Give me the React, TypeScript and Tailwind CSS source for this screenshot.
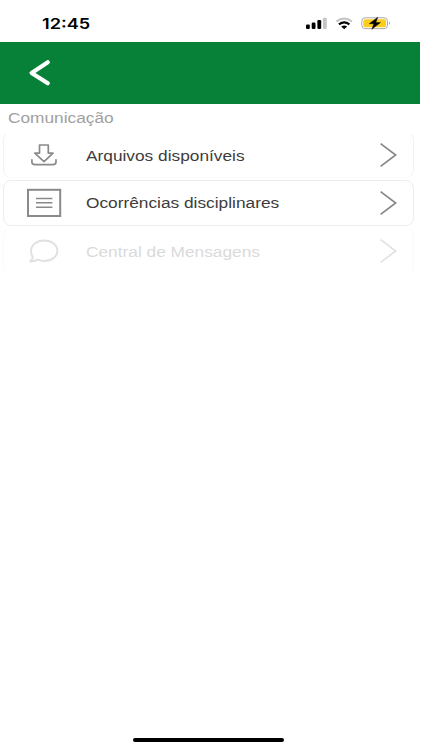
import React from "react";

type MenuItem = { label: string; icon: React.ReactNode; className: string; textClass: string };

function DownloadIcon() {
  return (
    <svg width="36" height="30" viewBox="0 0 36 30" fill="none" stroke="#8a8a8a" strokeWidth="1.7" strokeLinejoin="round" strokeLinecap="round">
      <path d="M13.500 5h8.800v8.100h4.700L18 21.600 8.800 13.100h4.700z" />
      <path d="M5.900 19.800v2.300q0 2.600 3 2.600h18.100q3 0 3-2.600v-2.300" />
    </svg>
  );
}

function ListIcon() {
  return (
    <svg width="36" height="30" viewBox="0 0 36 30" fill="none" stroke="#8a8a8a">
      <rect x="2" y="1.800" width="32.200" height="26.200" strokeWidth="2" />
      <path d="M10 10.500h16.400M10 14.800h16.400M10 19.200h16.400" strokeWidth="1.600" />
    </svg>
  );
}

function ChatIcon() {
  return (
    <svg width="36" height="30" viewBox="0 0 36 30" fill="none" stroke="#e1e1e1" strokeWidth="2" strokeLinejoin="round">
      <path d="M18.200 4.500c7.500 0 13.200 4.400 13.200 10.200S25.700 25 18.200 25c-2.500 0-4.600-.5-6.500-1.300-2.300 1.500-4.600 2-7.500 1.900 1.500-1.300 2.500-2.900 2.600-4.600-1.200-1.700-1.800-3.900-1.800-6.200C5 8.900 10.700 4.500 18.200 4.500z" />
    </svg>
  );
}

const items: MenuItem[] = [
  {
    label: "Arquivos disponíveis",
    icon: <DownloadIcon />,
    className: "h-[46px] border-x-[#f2f2f2] border-t-transparent border-b-[#fafafa] text-[#858585]",
    textClass: "pt-px text-[#3c3c3c]",
  },
  {
    label: "Ocorrências disciplinares",
    icon: <ListIcon />,
    className: "h-[46px] border-[#ededed] text-[#858585]",
    textClass: "text-[#3c3c3c]",
  },
  {
    label: "Central de Mensagens",
    icon: <ChatIcon />,
    className: "h-[46px] border-x-[#fafafa] border-y-transparent text-[#e1e1e1]",
    textClass: "pt-px text-[#dadada]",
  },
];

function StatusBar() {
  return (
    <div className="flex h-[42px] items-start justify-between pt-[15px] pr-[30px] pl-[42px]">
      <span className="block origin-left scale-x-[1.21] font-['Inter',sans-serif] text-[15px] leading-[17px] font-semibold text-black">
        12:45
      </span>
      <svg width="86" height="16" viewBox="0 0 86 16">
        <rect x="0" y="9.400" width="3.800" height="4.500" rx="1.200" />
        <rect x="5.700" y="7.600" width="3.800" height="6.300" rx="1.200" />
        <rect x="11.400" y="5" width="3.800" height="8.900" rx="1.200" />
        <rect x="17" y="2.800" width="3.800" height="11.100" rx="1.200" fill="#c4c4c4" />
        <g fill="none" strokeWidth="2.100">
          <path d="M30.400 6.500q7.800-6 15.600 0" stroke="#c4c4c4" />
          <path d="M33 9.400q5.200-4.200 10.400 0" stroke="#000" />
        </g>
        <path d="M35.200 11.400q3-2 6 0l-3 2.900z" />
        <rect x="55.800" y="2.800" width="25.700" height="10.800" rx="3.400" fill="#fff" stroke="#aaa" />
        <rect x="57.300" y="4.200" width="22.700" height="8" rx="2" fill="#fbcd1c" />
        <path d="M83 6.300q2 1.900 0 3.800z" fill="#aaa" />
        <path d="M71.800 2.200l-8.600 6.500h4.600l-2 5.600 8.700-6.700h-4.700z" stroke="#000" strokeWidth=".4" strokeLinejoin="round" />
      </svg>
    </div>
  );
}

function MenuRow({ item }: { item: MenuItem }) {
  return (
    <button className={`flex w-[411px] items-center rounded-lg border pr-[15px] pl-[22px] text-left ${item.className}`}>
      {item.icon}
      <span className={`ml-[24px] block flex-1 origin-left scale-x-[1.235] text-[14px] leading-5 whitespace-nowrap ${item.textClass}`}>
        {item.label}
      </span>
      <svg width="20" height="26" viewBox="0 0 20 26" fill="none" stroke="currentColor" strokeWidth="1.600">
        <path d="M2.600 1.700L17.700 13 2.600 24.400" />
      </svg>
    </button>
  );
}

export default function App() {
  return (
    <div className="flex h-[750px] w-[422px] flex-col overflow-hidden bg-white font-['Liberation_Sans',Arial,sans-serif]">
      <StatusBar />
      <header className="flex h-[62px] w-[420px] items-center bg-[#078137] pl-[26px]">
        <button aria-label="Voltar">
          <svg width="28" height="30" viewBox="0 0 28 30" fill="none" stroke="#fff" strokeWidth="4.200" strokeLinecap="round" strokeLinejoin="round">
            <path d="M21.800 4.300L5.600 14.900 21.800 25.200" />
          </svg>
        </button>
      </header>
      <main className="flex-1">
        <h1 className="h-[28px] pl-[8px]">
          <span className="block origin-left scale-x-[1.235] pt-[4px] text-[14px] leading-5 text-[#a0a0a0]">Comunicação</span>
        </h1>
        <div className="flex flex-col gap-[2px] pl-[3px]">
          {items.map((item) => (
            <MenuRow key={item.label} item={item} />
          ))}
        </div>
      </main>
      <footer className="flex h-[12px] justify-center pr-[5px]">
        <div className="h-[4px] w-[151px] rounded-full bg-black" />
      </footer>
    </div>
  );
}
